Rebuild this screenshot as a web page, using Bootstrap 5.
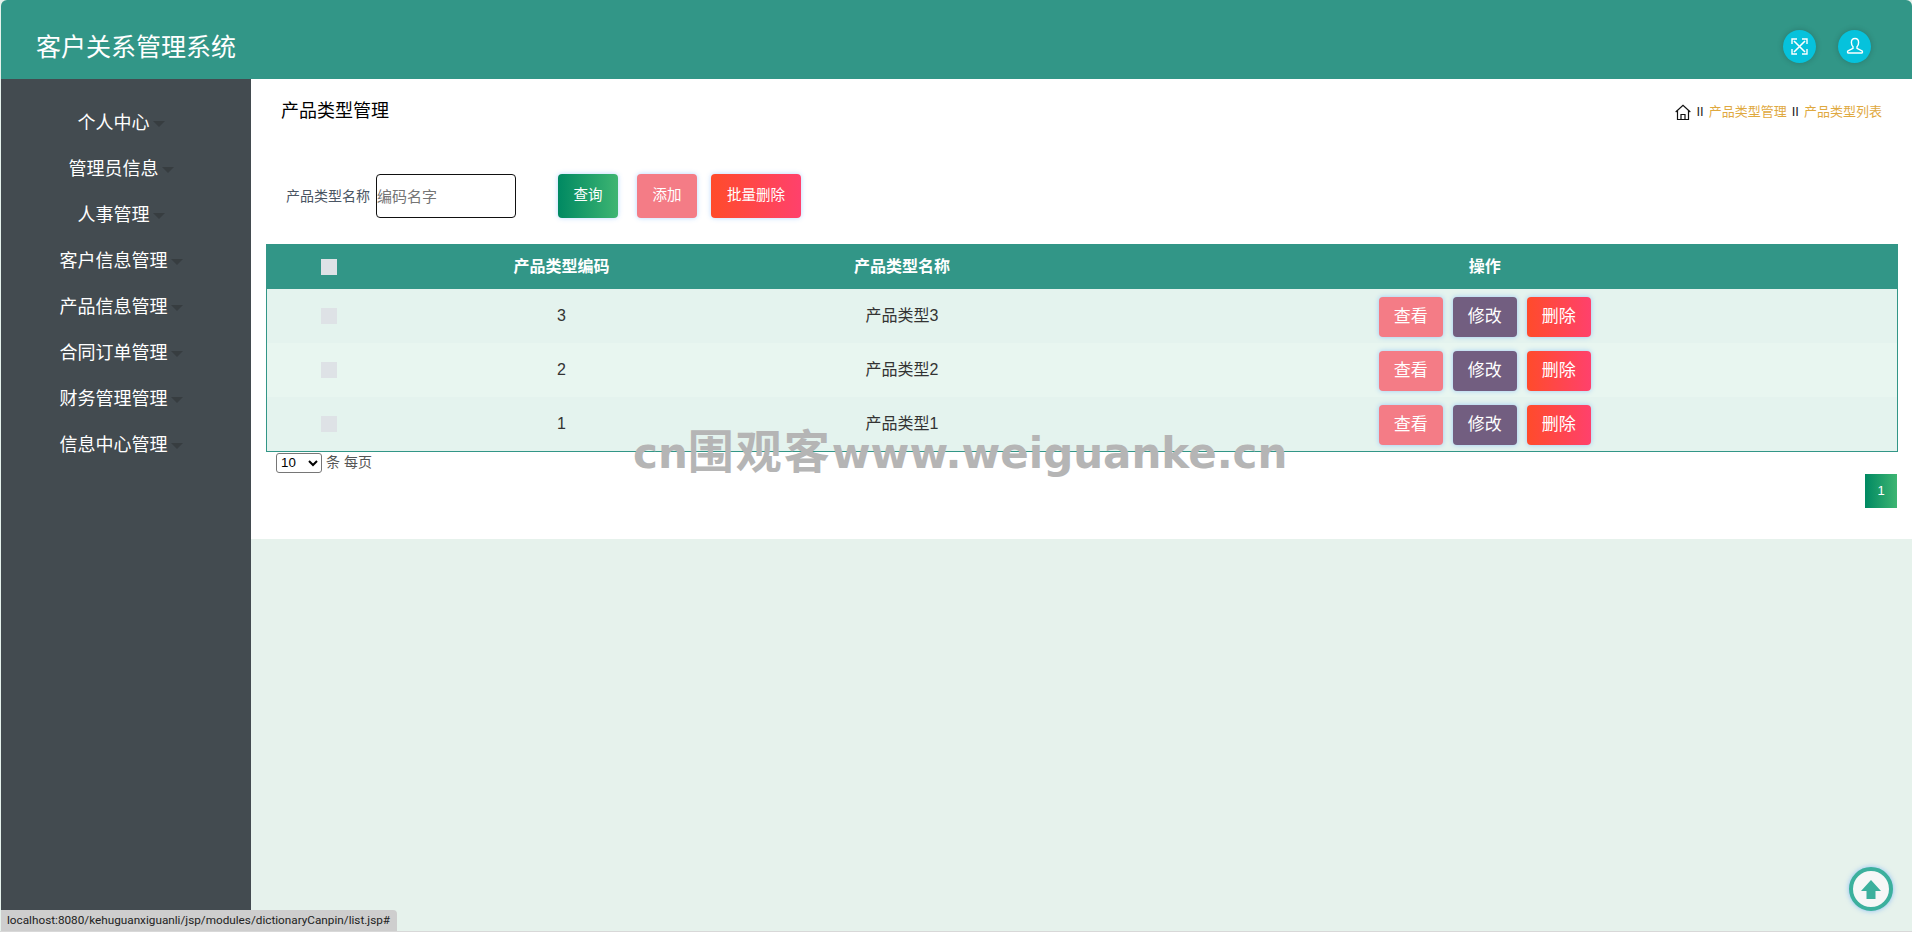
<!DOCTYPE html>
<html lang="zh">
<head>
<meta charset="utf-8">
<title>客户关系管理系统</title>
<link href="https://cdn.jsdelivr.net/npm/bootstrap@5.3.0/dist/css/bootstrap.min.css" rel="stylesheet">
<style>
html,body{height:100%;overflow:hidden}
body{font-family:"Liberation Sans","Noto Sans CJK SC",sans-serif;background:#e6f2ec;color:#333;font-size:14px;width:1912px;height:932px;position:relative;border-bottom:1px solid #d8d8d8}
.shell{height:931px;padding-left:1px}
.topbar{height:79px;background:#329687;border-top-left-radius:6px;border-top-right-radius:6px;padding:13px 41px 0 35px}
.brand{font-size:25px;color:#fff;line-height:1.2;margin:1px 0 0;font-weight:400}
.roundbtn{width:33px;height:33px;border-radius:50%;background:#06c2dc;box-shadow:0 0 6px rgba(0,0,0,.2)}
.topgap{gap:22px}
.bodyrow{height:852px}
.sidenav{width:250px;background:#434b50;padding:21px 10px 0 0}
.sideitem{height:46px;color:#fff;font-size:18px;white-space:nowrap;text-decoration:none}
.caretmark{display:inline-block;width:0;height:0;border:6px solid transparent;border-top-color:#373d40;border-bottom-width:0;margin-left:3px;margin-top:1px}
.mainpane{width:1661px}
.whitebox{background:#fff;height:460px;padding:0 0 0 15px}
.headrow{height:64px;padding:1px 30px 0 15px}
.pagetitle{font-size:18px;color:#000}
.crumbs{font-size:13px;color:#dfa93f;line-height:1}
.crumbsep{color:#222;font-size:13px;margin:0 5px}
.homeglyph{margin-right:6px}
.searchrow{height:101px;padding-top:31px;padding-left:20px}
.searchlabel{font-size:14px;color:#4a5563;margin-right:6px;height:44px;line-height:44px}
.searchinput{width:140px;height:44px;border:1px solid #111;border-radius:4px;font-size:15px;padding:0;color:#333;outline:0;background:#fff}
.searchinput::placeholder{color:#757575;opacity:1}
.actbtn{height:44px;border:0;border-radius:4px;color:#fff;font-size:14.5px;box-shadow:0 0 5px rgba(50,140,255,.35);padding:0}
.grad-green{background:linear-gradient(90deg,#008962,#3eb572)}
.grad-red{background:linear-gradient(90deg,#ff4b2b,#ff416c)}
.solid-pink{background:#f47c86}
.solid-plum{background:#725e80}
.w61{width:60px}.w90{width:90px}
.ml1{margin-left:42px}.ml2{margin-left:19px}.ml3{margin-left:14px}
.datatable{width:1632px;margin:0;border:1px solid #329687;border-collapse:collapse;table-layout:fixed;border-top:0}
.datatable thead th{background:#329687;color:#fff;height:45px;font-size:16px;font-weight:700;text-align:center;vertical-align:middle;padding:0;border:0}
.datatable tbody td{height:54px;font-size:16px;color:#333;text-align:center;vertical-align:middle;padding:0;border:0}
.datatable tbody tr.oddrow td{background:#e4f3ee}
.datatable tbody tr.evenrow td{background:#e8f6f0}
.rowbox{display:block;width:16px;height:16px;background:#dee2e6;margin:0 auto}
.rowbtn{width:64px;height:40px;border:0;border-radius:4px;color:#fff;font-size:17px;padding:0;box-shadow:0 0 5px rgba(50,140,255,.4);margin:2px 5px 0}
.lenrow{padding-left:10px;font-size:14px;color:#555;margin-top:1px;height:20px}
.lensel{width:46px;height:20px;font-size:13.3px;font-family:"Liberation Sans",sans-serif;padding:0;background:#fff;border:1px solid #767676;border-radius:3px;color:#000;margin-right:4px}
.pagerow{width:1631px;margin-top:1px}
.pagecell{width:32px;height:34px;background:linear-gradient(90deg,#008962,#3eb572);color:#fff;font-size:13px}
.statustip{position:absolute;left:1px;bottom:0;height:21px;background:#cecece;color:#222;font-size:11.75px;font-family:Roboto,"Liberation Sans",sans-serif;padding:0 7px 0 6px;border-top-right-radius:4px;line-height:21px;z-index:5}
.totop{position:absolute;left:1849px;top:867px;width:44px;height:44px;border-radius:50%;background:#f6f7f7;border:4px solid #3cb09d;box-shadow:0 0 5px rgba(50,140,255,.5)}
.stamp{position:absolute;left:633px;top:418px;font-size:42px;line-height:60px;font-weight:700;color:#b5b5b5;white-space:nowrap;font-family:"DejaVu Sans","Noto Sans CJK SC",sans-serif;pointer-events:none}
.stampcjk{font-size:46px;letter-spacing:2px;font-family:"Noto Sans CJK SC",sans-serif}
</style>
</head>
<body>
<div class="shell d-flex flex-column">
  <header class="topbar d-flex align-items-center justify-content-between">
    <h1 class="brand">客户关系管理系统</h1>
    <div class="d-flex topgap">
      <div class="roundbtn d-flex align-items-center justify-content-center">
        <svg width="17" height="17" viewBox="0 0 17 17" fill="none" stroke="#fff" stroke-width="1.6"><path d="M3 3l11 11M14 3L3 14"/><path d="M1 6V1h5M11 1h5v5M16 11v5h-5M6 16H1v-5" stroke-width="1.4"/></svg>
      </div>
      <div class="roundbtn d-flex align-items-center justify-content-center">
        <svg width="18" height="18" viewBox="0 0 18 18" fill="none" stroke="#fff" stroke-width="1.4"><path d="M9 1.5c2.4 0 3.6 1.8 3.6 4 0 2-.8 3.4-1.6 4.300v1.500l5 2.500c.8.400.6 2.200-.4 2.200H2.400c-1 0-1.200-1.800-.4-2.200l5-2.500V9.800C6.200 8.900 5.400 7.500 5.400 5.500c0-2.200 1.200-4 3.600-4z"/></svg>
      </div>
    </div>
  </header>
  <div class="bodyrow d-flex">
    <nav class="sidenav d-flex flex-column">
      <a class="sideitem d-flex align-items-center justify-content-center" href="#">个人中心<span class="caretmark"></span></a>
      <a class="sideitem d-flex align-items-center justify-content-center" href="#">管理员信息<span class="caretmark"></span></a>
      <a class="sideitem d-flex align-items-center justify-content-center" href="#">人事管理<span class="caretmark"></span></a>
      <a class="sideitem d-flex align-items-center justify-content-center" href="#">客户信息管理<span class="caretmark"></span></a>
      <a class="sideitem d-flex align-items-center justify-content-center" href="#">产品信息管理<span class="caretmark"></span></a>
      <a class="sideitem d-flex align-items-center justify-content-center" href="#">合同订单管理<span class="caretmark"></span></a>
      <a class="sideitem d-flex align-items-center justify-content-center" href="#">财务管理管理<span class="caretmark"></span></a>
      <a class="sideitem d-flex align-items-center justify-content-center" href="#">信息中心管理<span class="caretmark"></span></a>
    </nav>
    <main class="mainpane">
      <section class="whitebox">
        <div class="headrow d-flex align-items-center justify-content-between">
          <div class="pagetitle">产品类型管理</div>
          <div class="crumbs d-flex align-items-center">
            <svg class="homeglyph" width="16" height="16" viewBox="0 0 16 16" fill="none" stroke="#111" stroke-width="1.2"><path d="M.7 8L8 1.200 15.300 8"/><path d="M2.500 6.500v9h11v-9"/><path d="M6 15.500v-5h4v5"/></svg>
            <span class="crumbsep ms-0">II</span>产品类型管理<span class="crumbsep">II</span>产品类型列表
          </div>
        </div>
        <div class="searchrow d-flex align-items-start">
          <label class="searchlabel">产品类型名称</label>
          <input class="searchinput" placeholder="编码名字">
          <button class="actbtn grad-green w61 ml1" type="button">查询</button>
          <button class="actbtn solid-pink w61 ml2" type="button">添加</button>
          <button class="actbtn grad-red w90 ml3" type="button">批量删除</button>
        </div>
        <table class="datatable">
          <colgroup><col style="width:125px"><col style="width:340px"><col style="width:341px"><col></colgroup>
          <thead><tr><th><span class="rowbox"></span></th><th>产品类型编码</th><th>产品类型名称</th><th>操作</th></tr></thead>
          <tbody>
            <tr class="oddrow"><td><span class="rowbox"></span></td><td>3</td><td>产品类型3</td><td><button class="rowbtn solid-pink" type="button">查看</button><button class="rowbtn solid-plum" type="button">修改</button><button class="rowbtn grad-red" type="button">删除</button></td></tr>
            <tr class="evenrow"><td><span class="rowbox"></span></td><td>2</td><td>产品类型2</td><td><button class="rowbtn solid-pink" type="button">查看</button><button class="rowbtn solid-plum" type="button">修改</button><button class="rowbtn grad-red" type="button">删除</button></td></tr>
            <tr class="oddrow"><td><span class="rowbox"></span></td><td>1</td><td>产品类型1</td><td><button class="rowbtn solid-pink" type="button">查看</button><button class="rowbtn solid-plum" type="button">修改</button><button class="rowbtn grad-red" type="button">删除</button></td></tr>
          </tbody>
        </table>
        <div class="lenrow d-flex align-items-center"><select class="lensel"><option>10</option></select>条 每页</div>
        <div class="pagerow d-flex justify-content-end"><div class="pagecell d-flex align-items-center justify-content-center">1</div></div>
      </section>
    </main>
  </div>
</div>
<div class="stamp">cn<span class="stampcjk">围观客</span>www.weiguanke.cn</div>
<div class="statustip">localhost:8080/kehuguanxiguanli/jsp/modules/dictionaryCanpin/list.jsp#</div>
<div class="totop d-flex align-items-center justify-content-center">
  <svg width="20" height="19" viewBox="0 0 20 19" fill="#3cb09d"><path d="M10 0L20 11h-5.500v8h-9v-8H0z"/></svg>
</div>
</body>
</html>
